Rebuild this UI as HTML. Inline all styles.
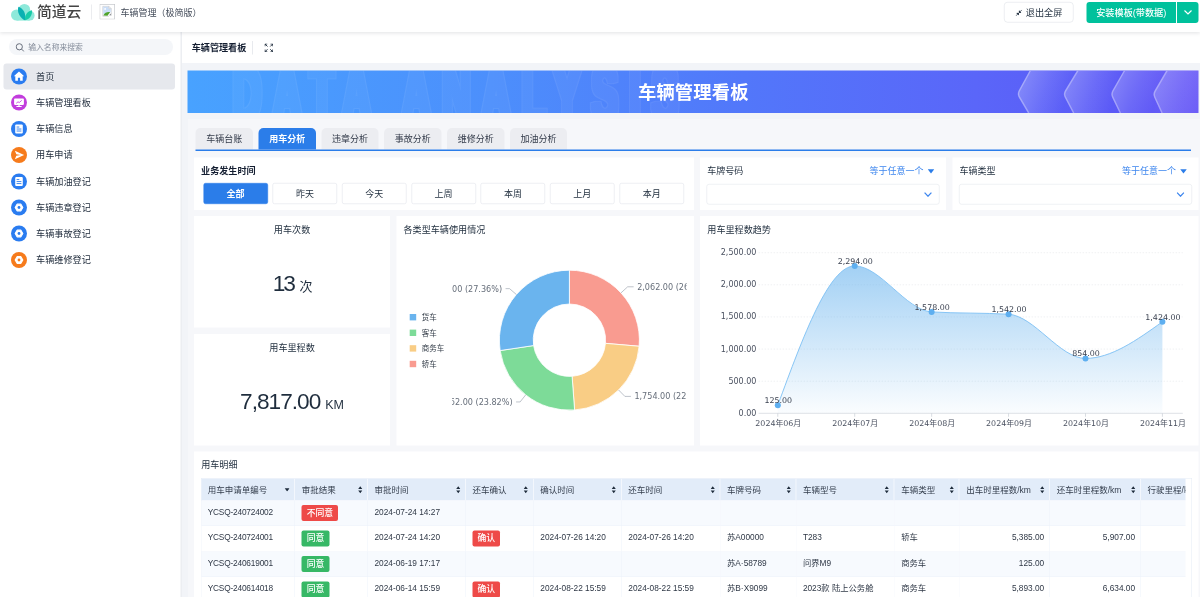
<!DOCTYPE html><html lang="zh-CN"><head><meta charset="utf-8"><title>车辆管理看板</title><style>
*{box-sizing:border-box}
html,body{margin:0;padding:0;width:1200px;height:597px;overflow:hidden;background:#fff}
#w{position:absolute;left:0;top:0;width:2400px;height:1194px;transform:scale(.5);transform-origin:0 0;
 font-family:"Liberation Sans","Noto Sans CJK SC",sans-serif;color:#1f2d3d;overflow:hidden;background:#f2f4f8;font-size:18px}
.abs{position:absolute}
#hdr{position:absolute;left:0;top:0;width:2400px;height:63.5px;background:#fff;box-shadow:0 2px 8px rgba(20,30,50,.13);z-index:10}
#side{position:absolute;left:0;top:63px;width:363.8px;height:1131px;background:#fff;border-right:3.4px solid #eceef2;z-index:2}
#tbar{position:absolute;left:361px;top:63px;width:2039px;height:63px;background:#fff}
.logo-t{position:absolute;left:74px;top:0px;font-size:29.5px;line-height:48px;color:#444;font-weight:500;letter-spacing:0}
.app-t{position:absolute;left:241px;top:9px;font-size:18px;line-height:32px;color:#434b59;white-space:nowrap}
.btn-exit{position:absolute;left:2008px;top:4px;width:139px;height:41px;border:1.5px solid #d9dce3;border-radius:7px;background:#fff;font-size:18px;line-height:38px;white-space:nowrap}
.btn-g{position:absolute;top:4px;height:41.6px;background:#00c19c;color:#fff;font-size:17.6px;line-height:42px;text-align:center;white-space:nowrap}
.search{position:absolute;left:17.5px;top:15px;width:328px;height:32px;border-radius:16px;background:#f4f6f9}
.search span{position:absolute;left:39px;top:0;line-height:32px;font-size:15.6px;color:#858d9b;white-space:nowrap}
.it{position:absolute;left:7px;width:343px;height:52px;border-radius:6px}
.it.on{background:#e6e8ed}
.it i{position:absolute;left:15px;top:10px;width:32px;height:32px;border-radius:50%;display:block}
.it span{position:absolute;left:65px;top:0;line-height:52px;font-size:18.3px;color:#232f3f;white-space:nowrap}
.it svg{position:absolute;left:0;top:0;width:32px;height:32px}
.card{position:absolute;background:#fff}
.ttl{position:absolute;font-size:18.2px;line-height:26px;white-space:nowrap;color:#1f2d3d}
.tab{position:absolute;top:255.6px;width:114.8px;height:43.4px;border-radius:10px 10px 0 0;background:#ecedf1;font-size:18px;line-height:44px;text-align:center;color:#333b4a;white-space:nowrap}
.tab.on{background:#2b7de9;color:#fff;font-weight:700}
.fb{position:absolute;top:50.8px;width:129px;height:41.8px;border:1.5px solid #dcdfe6;border-radius:4px;font-size:18px;line-height:43.6px;text-align:center;color:#1f2d3d;background:#fff}
.fb.on{background:#2b7de9;border-color:#2b7de9;color:#fff;font-weight:700}
.sel{position:absolute;top:52.4px;height:41.2px;border:1.5px solid #dfe2e8;border-radius:5px;background:#fff}
.eq{position:absolute;top:13.6px;font-size:18px;line-height:26px;color:#3d86ee;white-space:nowrap}
.kv{position:absolute;left:0;width:100%;text-align:center;white-space:nowrap;color:#1f2d3d}
.th,.td{position:absolute;white-space:nowrap;overflow:hidden;font-size:16.6px;color:#2f3846}
.th{color:#333d4c;font-size:17px}
.bdg{display:inline-block;height:31.6px;line-height:31.6px;padding:0 10px;border-radius:4px;color:#fff;font-weight:500;font-size:17.6px;vertical-align:top}
</style></head><body><div id="w">
<div id="hdr">
<svg class="abs" style="left:21px;top:6px" width="49" height="37" viewBox="55 30 245 185">
<g fill="#8ee9da"><circle cx="116" cy="150" r="56"/><circle cx="194" cy="96" r="57"/><circle cx="246" cy="156" r="50"/><rect x="116" y="150" width="130" height="56"/></g>
<path d="M200 203 C150 182 118 122 134 67 C188 84 212 140 200 203 Z" fill="#0ab0b2"/>
<path d="M200 203 C194 150 224 114 269 102 C276 152 246 192 200 203 Z" fill="#17cba8"/>
</svg>
<div class="logo-t">简道云</div>
<div class="abs" style="left:182px;top:9px;width:1.5px;height:30px;background:#ebecef"></div>
<svg class="abs" style="left:199px;top:8.4px" width="31" height="31" viewBox="0 0 33 33">
<rect x="0.75" y="0.75" width="31.5" height="31.5" fill="#fff" stroke="#c6c8cc" stroke-width="1.5"/>
<path d="M7 5 H20 L25 10 V21 L20 26 H7 Z" fill="#fff" stroke="#b9bcc2" stroke-width="1.2"/>
<path d="M8 6 H19.5 V10.5 H24 V17 L19 20 L8 22 Z" fill="#c9ddf7"/>
<path d="M8 24.5 C11 19 16 16.5 22.5 17.5 L17 25 Z" fill="#4ea22c"/>
<path d="M20 5 V10 H25" fill="none" stroke="#b9bcc2" stroke-width="1.2"/>
<path d="M21 23 l4 -3 v5 z" fill="#8a8d92"/>
<circle cx="12" cy="10.5" r="2" fill="#fff"/>
</svg>
<div class="app-t">车辆管理（极简版）</div>
<div class="btn-exit"><svg class="abs" style="left:22px;top:14px" width="13.5" height="13.5" viewBox="0 0 16 16"><path d="M9 7 L15 1 M9 7 V2.8 M9 7 H13.2 M7 9 L1 15 M7 9 V13.2 M7 9 H2.8" stroke="#1f2d3d" stroke-width="1.7" fill="none"/><path d="M8.4 7.6 V2.5 L13.5 7.6 Z M7.6 8.4 V13.5 L2.5 8.4 Z" fill="#1f2d3d"/></svg><span class="abs" style="left:42.5px;top:2.2px;font-size:18.3px">退出全屏</span></div>
<div class="btn-g" style="left:2173px;width:179px;border-radius:6px 0 0 6px;font-size:18.3px;font-weight:500;letter-spacing:0">安装模板(带数据)</div>
<div class="btn-g" style="left:2354px;width:42.5px;border-radius:0 6px 6px 0"><svg class="abs" style="left:13px;top:15px" width="18" height="12" viewBox="0 0 18 12"><path d="M2 2 L9 9 L16 2" fill="none" stroke="#fff" stroke-width="2.4"/></svg></div>
</div>
<div id="side">
<div class="search"><svg class="abs" style="left:13px;top:8px" width="18" height="18" viewBox="0 0 18 18"><circle cx="7.6" cy="7.6" r="6.2" fill="none" stroke="#5a6270" stroke-width="1.8"/><path d="M12.2 12.2 L17 17" stroke="#5a6270" stroke-width="1.8"/></svg><span>输入名称来搜索</span></div>
<div class="it on" style="top:64.0px"><i style="background:#2a7cf0"><svg viewBox="0 0 32 32"><path d="M16 6 L5.6 15.3 H8.6 V24.6 H13.8 V18.4 H18.2 V24.6 H23.4 V15.3 H26.4 Z" fill="#fff"/></svg></i><span>首页</span></div>
<div class="it" style="top:116.4px"><i style="background:#c23ddd"><svg viewBox="0 0 32 32"><rect x="6.2" y="8.2" width="19.6" height="12.6" rx="1.6" fill="#fff"/><path d="M10.5 17.5 L14 14.6 L16.5 16 L21.5 11.8" stroke="#c23ddd" stroke-width="1.7" fill="none"/><rect x="14.8" y="20.5" width="2.4" height="3" fill="#fff"/><rect x="10.5" y="22.8" width="11" height="2.2" rx="1" fill="#fff"/></svg></i><span>车辆管理看板</span></div>
<div class="it" style="top:168.8px"><i style="background:#2a7cf0"><svg viewBox="0 0 32 32"><rect x="8.4" y="6.8" width="15.2" height="18.4" rx="2.2" fill="#fff"/><rect x="11.2" y="11" width="5.4" height="2.1" fill="#2a7cf0" opacity=".85"/><rect x="11.2" y="15" width="9.6" height="2.1" fill="#2a7cf0" opacity=".85"/><rect x="11.2" y="19" width="9.6" height="2.1" fill="#2a7cf0" opacity=".85"/></svg></i><span>车辆信息</span></div>
<div class="it" style="top:221.2px"><i style="background:#f67b1c"><svg viewBox="0 0 32 32"><path d="M7.8 7.4 L26.2 16 L7.8 24.6 L10.6 17.3 L19.5 16 L10.6 14.7 Z" fill="#fff"/></svg></i><span>用车申请</span></div>
<div class="it" style="top:273.6px"><i style="background:#2a7cf0"><svg viewBox="0 0 32 32"><rect x="8.4" y="6.8" width="15.2" height="18.4" rx="2.2" fill="#fff"/><rect x="11.2" y="11" width="5.4" height="2.1" fill="#2a7cf0" opacity=".85"/><rect x="11.2" y="15" width="9.6" height="2.1" fill="#2a7cf0" opacity=".85"/><rect x="11.2" y="19" width="9.6" height="2.1" fill="#2a7cf0" opacity=".85"/></svg></i><span>车辆加油登记</span></div>
<div class="it" style="top:326.0px"><i style="background:#2a7cf0"><svg viewBox="0 0 32 32"><path d="M23.6 16 L19.8 22.6 H12.2 L8.4 16 L12.2 9.4 H19.8 Z" fill="#fff" stroke="#fff" stroke-width="2.4" stroke-linejoin="round"/><circle cx="16" cy="16" r="2.8" fill="#2a7cf0"/></svg></i><span>车辆违章登记</span></div>
<div class="it" style="top:378.4px"><i style="background:#2a7cf0"><svg viewBox="0 0 32 32"><path d="M23.6 16 L19.8 22.6 H12.2 L8.4 16 L12.2 9.4 H19.8 Z" fill="#fff" stroke="#fff" stroke-width="2.4" stroke-linejoin="round"/><circle cx="16" cy="16" r="2.8" fill="#2a7cf0"/></svg></i><span>车辆事故登记</span></div>
<div class="it" style="top:430.8px"><i style="background:#f67b1c"><svg viewBox="0 0 32 32"><path d="M23.6 16 L19.8 22.6 H12.2 L8.4 16 L12.2 9.4 H19.8 Z" fill="#fff" stroke="#fff" stroke-width="2.4" stroke-linejoin="round"/><circle cx="16" cy="16" r="2.8" fill="#f67b1c"/></svg></i><span>车辆维修登记</span></div>
</div>
<div id="tbar"><div class="abs" style="left:22.4px;top:18.6px;font-size:18.2px;line-height:28px;font-weight:700;color:#141e31;white-space:nowrap">车辆管理看板</div>
<div class="abs" style="left:143px;top:19px;width:1.5px;height:26.6px;background:#e8eaee"></div>
<svg class="abs" style="left:167.5px;top:23.5px" width="17.5" height="17.5" viewBox="0 0 19 19"><g fill="none" stroke="#1f2d3d" stroke-width="2"><path d="M1 6 V1 H6 M1.3 1.3 L6.5 6.5"/><path d="M13 1 H18 V6 M17.7 1.3 L12.5 6.5"/><path d="M1 13 V18 H6 M1.3 17.7 L6.5 12.5"/><path d="M18 13 V18 H13 M17.7 17.7 L12.5 12.5"/></g></svg>
</div>
<div class="abs" style="left:375.4px;top:141.0px;width:2021.8px;height:85.0px;background:linear-gradient(90deg,#48a2ff 0%,#4c8ffc 30%,#5277fa 55%,#5a66f9 78%,#5b58f6 93%,#6d5ef7 100%);overflow:hidden">
<svg class="abs" style="left:0;top:0" width="2021.8" height="85.0" viewBox="0 0 2021.8 85.0">
<defs><linearGradient id="cg" x1="0" y1="0" x2="1" y2="0"><stop offset="0" stop-color="#fff" stop-opacity=".25"/><stop offset=".85" stop-color="#fff" stop-opacity="0"/></linearGradient></defs>
<filter id="blk" x="-5%" y="-30%" width="110%" height="160%"><feMorphology in="SourceAlpha" operator="dilate" radius="4" result="t1"/><feMorphology in="SourceAlpha" operator="dilate" radius="5.3" result="t2"/><feComposite in="t2" in2="t1" operator="out" result="ring"/><feFlood flood-color="#fff" flood-opacity=".04"/><feComposite in2="t1" operator="in" result="fc"/><feFlood flood-color="#fff" flood-opacity=".085"/><feComposite in2="ring" operator="in" result="rc"/><feMerge><feMergeNode in="fc"/><feMergeNode in="rc"/></feMerge></filter>
<g filter="url(#blk)"><text transform="translate(91,0) scale(.52,1)" x="0" y="96" font-family="'Liberation Sans',sans-serif" font-weight="700" font-size="150" textLength="1712" lengthAdjust="spacing" fill="#fff">DATA ANALYSIS</text></g>
<linearGradient id="cg0" gradientUnits="userSpaceOnUse" x1="1663.0" y1="25" x2="1757.2" y2="62"><stop offset="0" stop-color="#fff" stop-opacity=".25"/><stop offset=".55" stop-color="#fff" stop-opacity=".1"/><stop offset="1" stop-color="#fff" stop-opacity="0"/></linearGradient>
<path d="M1684.6 0.0 L1662.3 40.9 Q1659.0 47.0 1662.5 53.0 L1681.2 85.0 L1771.2 85.0 L1754.5 53.2 Q1751.2 47.0 1754.8 41.0 L1779.6 0.0 Z" fill="url(#cg0)"/>
<path d="M1684.6 0.0 L1662.3 40.9 Q1659.0 47.0 1662.5 53.0 L1681.2 85.0" fill="none" stroke="rgba(255,255,255,.3)" stroke-width="3" transform="translate(1.2,0)"/>
<linearGradient id="cg1" gradientUnits="userSpaceOnUse" x1="1755.2" y1="25" x2="1852.2" y2="62"><stop offset="0" stop-color="#fff" stop-opacity=".25"/><stop offset=".55" stop-color="#fff" stop-opacity=".1"/><stop offset="1" stop-color="#fff" stop-opacity="0"/></linearGradient>
<path d="M1779.6 0.0 L1754.8 41.0 Q1751.2 47.0 1754.5 53.2 L1771.2 85.0 L1864.6 85.0 L1849.3 53.3 Q1846.2 47.0 1849.7 40.9 L1873.0 0.0 Z" fill="url(#cg1)"/>
<path d="M1779.6 0.0 L1754.8 41.0 Q1751.2 47.0 1754.5 53.2 L1771.2 85.0" fill="none" stroke="rgba(255,255,255,.3)" stroke-width="3" transform="translate(1.2,0)"/>
<linearGradient id="cg2" gradientUnits="userSpaceOnUse" x1="1850.2" y1="25" x2="1936.6" y2="62"><stop offset="0" stop-color="#fff" stop-opacity=".25"/><stop offset=".55" stop-color="#fff" stop-opacity=".1"/><stop offset="1" stop-color="#fff" stop-opacity="0"/></linearGradient>
<path d="M1873.0 0.0 L1849.7 40.9 Q1846.2 47.0 1849.3 53.3 L1864.6 85.0 L1948.0 85.0 L1933.5 53.4 Q1930.6 47.0 1934.1 41.0 L1958.0 0.0 Z" fill="url(#cg2)"/>
<path d="M1873.0 0.0 L1849.7 40.9 Q1846.2 47.0 1849.3 53.3 L1864.6 85.0" fill="none" stroke="rgba(255,255,255,.3)" stroke-width="3" transform="translate(1.2,0)"/>
<linearGradient id="cg3" gradientUnits="userSpaceOnUse" x1="1934.6" y1="25" x2="2028.6" y2="62"><stop offset="0" stop-color="#fff" stop-opacity=".25"/><stop offset=".55" stop-color="#fff" stop-opacity=".1"/><stop offset="1" stop-color="#fff" stop-opacity="0"/></linearGradient>
<path d="M1958.0 0.0 L1934.1 41.0 Q1930.6 47.0 1933.5 53.4 L1948.0 85.0 L2040.6 85.0 L2025.6 53.3 Q2022.6 47.0 2026.1 40.9 L2049.6 0.0 Z" fill="url(#cg3)"/>
<path d="M1958.0 0.0 L1934.1 41.0 Q1930.6 47.0 1933.5 53.4 L1948.0 85.0" fill="none" stroke="rgba(255,255,255,.3)" stroke-width="3" transform="translate(1.2,0)"/>
</svg>
<div class="abs" style="left:900.6px;top:19px;font-size:36.6px;line-height:50px;font-weight:700;color:#fff;white-space:nowrap;letter-spacing:.3px">车辆管理看板</div>
</div>
<div class="abs" style="left:376px;top:238.4px;width:2024px;height:960px;background:#f6f7fa"></div>
<div class="tab" style="left:391.2px">车辆台账</div>
<div class="tab on" style="left:516.9px">用车分析</div>
<div class="tab" style="left:642.6px">违章分析</div>
<div class="tab" style="left:768.3px">事故分析</div>
<div class="tab" style="left:894.0px">维修分析</div>
<div class="tab" style="left:1019.7px">加油分析</div>
<div class="abs" style="left:391.2px;top:298.8px;width:1990.4px;height:2.8px;background:#2b7de9"></div>
<div class="card" style="left:388.1px;top:315.2px;width:999.5px;height:104.6px">
<div class="ttl" style="left:14px;top:12.6px;font-weight:700;color:#141e31">业务发生时间</div>
<div class="fb on" style="left:18.5px">全部</div>
<div class="fb" style="left:157.2px">昨天</div>
<div class="fb" style="left:295.9px">今天</div>
<div class="fb" style="left:434.6px">上周</div>
<div class="fb" style="left:573.3px">本周</div>
<div class="fb" style="left:712.0px">上月</div>
<div class="fb" style="left:850.7px">本月</div>
</div>
<div class="card" style="left:1400.4px;top:315.2px;width:492.0px;height:104.6px">
<div class="ttl" style="left:14px;top:13.6px;font-size:18px">车牌号码</div>
<div class="eq" style="right:45.5px">等于任意一个</div>
<svg class="abs" style="right:23.5px;top:23px" width="14" height="9.5" viewBox="0 0 13 9"><path d="M0.3 0.6 H12.7 L6.5 8.6 Z" fill="#2b7de9"/></svg>
<div class="sel" style="left:13px;width:466.0px"><svg class="abs" style="right:14px;top:15px" width="16" height="10.5" viewBox="0 0 15 10"><path d="M1 1.2 L7.5 8 L14 1.2" fill="none" stroke="#3d86ee" stroke-width="2.4"/></svg></div>
</div>
<div class="card" style="left:1905.2px;top:315.2px;width:492.2px;height:104.6px">
<div class="ttl" style="left:14px;top:13.6px;font-size:18px">车辆类型</div>
<div class="eq" style="right:45.5px">等于任意一个</div>
<svg class="abs" style="right:23.5px;top:23px" width="14" height="9.5" viewBox="0 0 13 9"><path d="M0.3 0.6 H12.7 L6.5 8.6 Z" fill="#2b7de9"/></svg>
<div class="sel" style="left:13px;width:466.2px"><svg class="abs" style="right:14px;top:15px" width="16" height="10.5" viewBox="0 0 15 10"><path d="M1 1.2 L7.5 8 L14 1.2" fill="none" stroke="#3d86ee" stroke-width="2.4"/></svg></div>
</div>
<div class="card" style="left:388.1px;top:432.2px;width:392px;height:223px">
<div class="kv" style="top:14px;font-size:18.2px;line-height:26px">用车次数</div>
<div class="kv" style="top:107px;line-height:56px;padding-left:2px"><span style="font-size:45.5px;letter-spacing:-4px">13</span><span style="font-size:26px;margin-left:11px">次</span></div>
</div>
<div class="card" style="left:388.1px;top:668px;width:392px;height:222.7px">
<div class="kv" style="top:14px;font-size:18.2px;line-height:26px">用车里程数</div>
<div class="kv" style="top:105.5px;line-height:56px"><span style="font-size:45.3px;letter-spacing:-2px">7,817.00</span><span style="font-size:25px;margin-left:10px">KM</span></div>
</div>
<div class="card" style="left:792.8px;top:432.2px;width:594.8px;height:458.5px">
<div class="ttl" style="left:14.2px;top:14px">各类型车辆使用情况</div>
<svg class="abs" style="left:0;top:0" width="594.8" height="458.5" viewBox="0 0 594.8 458.5" font-family="'DejaVu Sans','Noto Sans CJK SC',sans-serif">
<defs><clipPath id="dc"><rect x="111.2" y="40" width="469.0" height="410"/></clipPath></defs>
<g clip-path="url(#dc)">
<path d="M345.80 108.40 A140.0 140.0 0 0 1 485.28 260.51 L417.93 254.66 A72.4 72.4 0 0 0 345.80 176.00 Z" fill="#f99b90" stroke="#fff" stroke-width="1.6"/>
<path d="M485.28 260.51 A140.0 140.0 0 0 1 356.20 388.01 L351.18 320.60 A72.4 72.4 0 0 0 417.93 254.66 Z" fill="#f9cd85" stroke="#fff" stroke-width="1.6"/>
<path d="M356.20 388.01 A140.0 140.0 0 0 1 207.34 269.11 L274.20 259.11 A72.4 72.4 0 0 0 351.18 320.60 Z" fill="#7ddb98" stroke="#fff" stroke-width="1.6"/>
<path d="M207.34 269.11 A140.0 140.0 0 0 1 345.80 108.40 L345.80 176.00 A72.4 72.4 0 0 0 274.20 259.11 Z" fill="#6ab4ee" stroke="#fff" stroke-width="1.6"/>
<polyline points="449.0,153.8 462.3,141.6 474.3,141.6" fill="none" stroke="#9aa3ad" stroke-width="1.3"/>
<text x="481.3" y="147.6" font-size="16.2" fill="#666e7a" text-anchor="start">2,062.00 (26.38%)</text>
<polyline points="444.2,348.0 456.8,360.8 468.8,360.8" fill="none" stroke="#9aa3ad" stroke-width="1.3"/>
<text x="475.8" y="366.8" font-size="16.2" fill="#666e7a" text-anchor="start">1,754.00 (22.44%)</text>
<polyline points="258.4,357.8 247.2,371.9 239.2,371.9" fill="none" stroke="#9aa3ad" stroke-width="1.3"/>
<text x="232.2" y="377.9" font-size="16.2" fill="#666e7a" text-anchor="end">1,862.00 (23.82%)</text>
<polyline points="239.7,157.0 226.1,145.3 218.1,145.3" fill="none" stroke="#9aa3ad" stroke-width="1.3"/>
<text x="211.1" y="151.3" font-size="16.2" fill="#666e7a" text-anchor="end">2,139.00 (27.36%)</text>
</g>
<rect x="26.4" y="196.0" width="13" height="12.8" fill="#6ab4ee"/>
<text x="50.4" y="208.0" font-size="15" fill="#333c48" font-family="'Liberation Sans','Noto Sans CJK SC',sans-serif">货车</text>
<rect x="26.4" y="227.2" width="13" height="12.8" fill="#7ddb98"/>
<text x="50.4" y="239.2" font-size="15" fill="#333c48" font-family="'Liberation Sans','Noto Sans CJK SC',sans-serif">客车</text>
<rect x="26.4" y="258.4" width="13" height="12.8" fill="#f9cd85"/>
<text x="50.4" y="270.4" font-size="15" fill="#333c48" font-family="'Liberation Sans','Noto Sans CJK SC',sans-serif">商务车</text>
<rect x="26.4" y="289.6" width="13" height="12.8" fill="#f99b90"/>
<text x="50.4" y="301.6" font-size="15" fill="#333c48" font-family="'Liberation Sans','Noto Sans CJK SC',sans-serif">轿车</text>
</svg></div>
<div class="card" style="left:1400.4px;top:432.2px;width:997px;height:458.5px">
<div class="ttl" style="left:14.2px;top:14px">用车里程数趋势</div>
<svg class="abs" style="left:0;top:0" width="997" height="458.5" viewBox="0 0 997 458.5" font-family="'DejaVu Sans','Noto Sans CJK SC',sans-serif">
<defs><linearGradient id="ag" x1="0" y1="0" x2="0" y2="1"><stop offset="0" stop-color="#6ab4ee" stop-opacity=".62"/><stop offset="1" stop-color="#6ab4ee" stop-opacity=".03"/></linearGradient></defs>
<text x="112.8" y="399.5" font-size="16" fill="#4a5160" text-anchor="end">0.00</text>
<line x1="117.2" y1="330.4" x2="965.6" y2="330.4" stroke="#e9ebee" stroke-width="1.4" stroke-dasharray="3 3"/>
<text x="112.8" y="335.3" font-size="16" fill="#4a5160" text-anchor="end">500.00</text>
<line x1="117.2" y1="266.1" x2="965.6" y2="266.1" stroke="#e9ebee" stroke-width="1.4" stroke-dasharray="3 3"/>
<text x="112.8" y="271.0" font-size="16" fill="#4a5160" text-anchor="end">1,000.00</text>
<line x1="117.2" y1="201.9" x2="965.6" y2="201.9" stroke="#e9ebee" stroke-width="1.4" stroke-dasharray="3 3"/>
<text x="112.8" y="206.8" font-size="16" fill="#4a5160" text-anchor="end">1,500.00</text>
<line x1="117.2" y1="137.6" x2="965.6" y2="137.6" stroke="#e9ebee" stroke-width="1.4" stroke-dasharray="3 3"/>
<text x="112.8" y="142.5" font-size="16" fill="#4a5160" text-anchor="end">2,000.00</text>
<line x1="117.2" y1="73.4" x2="965.6" y2="73.4" stroke="#e9ebee" stroke-width="1.4" stroke-dasharray="3 3"/>
<text x="112.8" y="78.3" font-size="16" fill="#4a5160" text-anchor="end">2,500.00</text>
<line x1="117.2" y1="394.6" x2="965.6" y2="394.6" stroke="#d5d9e0" stroke-width="1.6"/>
<path d="M155.60 378.54 C206.88 239.20 258.16 99.87 309.44 99.87 C360.72 99.87 412.00 188.78 463.28 191.86 C514.56 194.94 565.84 193.40 617.12 196.48 C668.40 199.57 719.68 284.88 770.96 284.88 C822.24 284.88 873.52 248.26 924.80 211.64 L924.80 394.60 L155.60 394.60 Z" fill="url(#ag)"/>
<path d="M155.60 378.54 C206.88 239.20 258.16 99.87 309.44 99.87 C360.72 99.87 412.00 188.78 463.28 191.86 C514.56 194.94 565.84 193.40 617.12 196.48 C668.40 199.57 719.68 284.88 770.96 284.88 C822.24 284.88 873.52 248.26 924.80 211.64" fill="none" stroke="#7cc0f4" stroke-width="1.8"/>
<line x1="155.6" y1="394.6" x2="155.6" y2="401.6" stroke="#c9ced6" stroke-width="1.4"/>
<circle cx="155.60" cy="378.54" r="6" fill="#5eaff0"/>
<text x="156.6" y="373.9" font-size="15.8" fill="#3a4150" text-anchor="middle">125.00</text>
<text x="156.6" y="419.2" font-size="15.8" fill="#4a5160" text-anchor="middle">2024年06月</text>
<line x1="309.4" y1="394.6" x2="309.4" y2="401.6" stroke="#c9ced6" stroke-width="1.4"/>
<circle cx="309.44" cy="99.87" r="6" fill="#5eaff0"/>
<text x="310.4" y="95.3" font-size="15.8" fill="#3a4150" text-anchor="middle">2,294.00</text>
<text x="310.4" y="419.2" font-size="15.8" fill="#4a5160" text-anchor="middle">2024年07月</text>
<line x1="463.3" y1="394.6" x2="463.3" y2="401.6" stroke="#c9ced6" stroke-width="1.4"/>
<circle cx="463.28" cy="191.86" r="6" fill="#5eaff0"/>
<text x="464.3" y="187.3" font-size="15.8" fill="#3a4150" text-anchor="middle">1,578.00</text>
<text x="464.3" y="419.2" font-size="15.8" fill="#4a5160" text-anchor="middle">2024年08月</text>
<line x1="617.1" y1="394.6" x2="617.1" y2="401.6" stroke="#c9ced6" stroke-width="1.4"/>
<circle cx="617.12" cy="196.48" r="6" fill="#5eaff0"/>
<text x="618.1" y="191.9" font-size="15.8" fill="#3a4150" text-anchor="middle">1,542.00</text>
<text x="618.1" y="419.2" font-size="15.8" fill="#4a5160" text-anchor="middle">2024年09月</text>
<line x1="771.0" y1="394.6" x2="771.0" y2="401.6" stroke="#c9ced6" stroke-width="1.4"/>
<circle cx="770.96" cy="284.88" r="6" fill="#5eaff0"/>
<text x="772.0" y="280.3" font-size="15.8" fill="#3a4150" text-anchor="middle">854.00</text>
<text x="772.0" y="419.2" font-size="15.8" fill="#4a5160" text-anchor="middle">2024年10月</text>
<line x1="924.8" y1="394.6" x2="924.8" y2="401.6" stroke="#c9ced6" stroke-width="1.4"/>
<circle cx="924.80" cy="211.64" r="6" fill="#5eaff0"/>
<text x="925.8" y="207.0" font-size="15.8" fill="#3a4150" text-anchor="middle">1,424.00</text>
<text x="925.8" y="419.2" font-size="15.8" fill="#4a5160" text-anchor="middle">2024年11月</text>
</svg></div>
<div class="card" style="left:388.1px;top:903.4px;width:2009.3px;height:300px">
<div class="ttl" style="left:14.2px;top:13px">用车明细</div>
<div class="abs" style="left:13.7px;top:52.6px;width:1982.6px;height:260px;border:1.4px solid #e3eaf5;border-bottom:0;overflow:hidden;background:#fff">
<div class="abs" style="left:0;top:0;width:1968.2px;height:260px;overflow:hidden">
<div class="th" style="left:-1.4px;top:0;width:189.0px;height:43.8px;line-height:45.8px;background:#e2ecf9;border-right:2px solid #f3f7fd;padding-left:14px">用车申请单编号<svg class="abs" style="right:9px;top:19px" width="10.5" height="7.5" viewBox="0 0 10 7"><path d="M0.3 0.5 H9.7 L5 6.5 Z" fill="#1f2d3d"/></svg></div>
<div class="th" style="left:187.6px;top:0;width:145.6px;height:43.8px;line-height:45.8px;background:#e2ecf9;border-right:2px solid #f3f7fd;padding-left:13px">审批结果<svg class="abs" style="right:9.2px;top:15px" width="9" height="15" viewBox="0 0 9 15"><path d="M4.5 0.5 L8.6 6 H0.4 Z M4.5 14.5 L8.6 9 H0.4 Z" fill="#1f2d3d"/></svg></div>
<div class="th" style="left:333.2px;top:0;width:196.1px;height:43.8px;line-height:45.8px;background:#e2ecf9;border-right:2px solid #f3f7fd;padding-left:13px">审批时间<svg class="abs" style="right:9.2px;top:15px" width="9" height="15" viewBox="0 0 9 15"><path d="M4.5 0.5 L8.6 6 H0.4 Z M4.5 14.5 L8.6 9 H0.4 Z" fill="#1f2d3d"/></svg></div>
<div class="th" style="left:529.3px;top:0;width:135.6px;height:43.8px;line-height:45.8px;background:#e2ecf9;border-right:2px solid #f3f7fd;padding-left:13px">还车确认<svg class="abs" style="right:9.2px;top:15px" width="9" height="15" viewBox="0 0 9 15"><path d="M4.5 0.5 L8.6 6 H0.4 Z M4.5 14.5 L8.6 9 H0.4 Z" fill="#1f2d3d"/></svg></div>
<div class="th" style="left:664.9px;top:0;width:176.0px;height:43.8px;line-height:45.8px;background:#e2ecf9;border-right:2px solid #f3f7fd;padding-left:13px">确认时间<svg class="abs" style="right:9.2px;top:15px" width="9" height="15" viewBox="0 0 9 15"><path d="M4.5 0.5 L8.6 6 H0.4 Z M4.5 14.5 L8.6 9 H0.4 Z" fill="#1f2d3d"/></svg></div>
<div class="th" style="left:840.9px;top:0;width:197.4px;height:43.8px;line-height:45.8px;background:#e2ecf9;border-right:2px solid #f3f7fd;padding-left:13px">还车时间<svg class="abs" style="right:9.2px;top:15px" width="9" height="15" viewBox="0 0 9 15"><path d="M4.5 0.5 L8.6 6 H0.4 Z M4.5 14.5 L8.6 9 H0.4 Z" fill="#1f2d3d"/></svg></div>
<div class="th" style="left:1038.3px;top:0;width:151.7px;height:43.8px;line-height:45.8px;background:#e2ecf9;border-right:2px solid #f3f7fd;padding-left:13px">车牌号码<svg class="abs" style="right:9.2px;top:15px" width="9" height="15" viewBox="0 0 9 15"><path d="M4.5 0.5 L8.6 6 H0.4 Z M4.5 14.5 L8.6 9 H0.4 Z" fill="#1f2d3d"/></svg></div>
<div class="th" style="left:1190.0px;top:0;width:196.7px;height:43.8px;line-height:45.8px;background:#e2ecf9;border-right:2px solid #f3f7fd;padding-left:13px">车辆型号<svg class="abs" style="right:9.2px;top:15px" width="9" height="15" viewBox="0 0 9 15"><path d="M4.5 0.5 L8.6 6 H0.4 Z M4.5 14.5 L8.6 9 H0.4 Z" fill="#1f2d3d"/></svg></div>
<div class="th" style="left:1386.7px;top:0;width:130.0px;height:43.8px;line-height:45.8px;background:#e2ecf9;border-right:2px solid #f3f7fd;padding-left:13px">车辆类型<svg class="abs" style="right:9.2px;top:15px" width="9" height="15" viewBox="0 0 9 15"><path d="M4.5 0.5 L8.6 6 H0.4 Z M4.5 14.5 L8.6 9 H0.4 Z" fill="#1f2d3d"/></svg></div>
<div class="th" style="left:1516.7px;top:0;width:181.0px;height:43.8px;line-height:45.8px;background:#e2ecf9;border-right:2px solid #f3f7fd;padding-left:13px">出车时里程数/km<svg class="abs" style="right:9.2px;top:15px" width="9" height="15" viewBox="0 0 9 15"><path d="M4.5 0.5 L8.6 6 H0.4 Z M4.5 14.5 L8.6 9 H0.4 Z" fill="#1f2d3d"/></svg></div>
<div class="th" style="left:1697.7px;top:0;width:181.6px;height:43.8px;line-height:45.8px;background:#e2ecf9;border-right:2px solid #f3f7fd;padding-left:13px">还车时里程数/km<svg class="abs" style="right:9.2px;top:15px" width="9" height="15" viewBox="0 0 9 15"><path d="M4.5 0.5 L8.6 6 H0.4 Z M4.5 14.5 L8.6 9 H0.4 Z" fill="#1f2d3d"/></svg></div>
<div class="th" style="left:1879.3px;top:0;width:197.5px;height:43.8px;line-height:45.8px;background:#e2ecf9;border-right:2px solid #f3f7fd;padding-left:13px">行驶里程/km<svg class="abs" style="right:9.2px;top:15px" width="9" height="15" viewBox="0 0 9 15"><path d="M4.5 0.5 L8.6 6 H0.4 Z M4.5 14.5 L8.6 9 H0.4 Z" fill="#1f2d3d"/></svg></div>
<div class="td" style="left:-1.4px;top:43.8px;width:189.0px;height:51.1px;line-height:46.7px;background:#f7fafe;border-right:1.4px solid #edf2fa;border-bottom:1.4px solid #edf2fa;padding-left:14px;letter-spacing:-.36px">YCSQ-240724002</div>
<div class="td" style="left:187.6px;top:43.8px;width:145.6px;height:51.1px;line-height:46.7px;background:#f7fafe;border-right:1.4px solid #edf2fa;border-bottom:1.4px solid #edf2fa;padding-left:13px"><span class="bdg" style="background:#ee4a48;margin-top:9.3px">不同意</span></div>
<div class="td" style="left:333.2px;top:43.8px;width:196.1px;height:51.1px;line-height:46.7px;background:#f7fafe;border-right:1.4px solid #edf2fa;border-bottom:1.4px solid #edf2fa;padding-left:13px">2024-07-24 14:27</div>
<div class="td" style="left:529.3px;top:43.8px;width:135.6px;height:51.1px;line-height:46.7px;background:#f7fafe;border-right:1.4px solid #edf2fa;border-bottom:1.4px solid #edf2fa;padding-left:13px"></div>
<div class="td" style="left:664.9px;top:43.8px;width:176.0px;height:51.1px;line-height:46.7px;background:#f7fafe;border-right:1.4px solid #edf2fa;border-bottom:1.4px solid #edf2fa;padding-left:13px"></div>
<div class="td" style="left:840.9px;top:43.8px;width:197.4px;height:51.1px;line-height:46.7px;background:#f7fafe;border-right:1.4px solid #edf2fa;border-bottom:1.4px solid #edf2fa;padding-left:13px"></div>
<div class="td" style="left:1038.3px;top:43.8px;width:151.7px;height:51.1px;line-height:46.7px;background:#f7fafe;border-right:1.4px solid #edf2fa;border-bottom:1.4px solid #edf2fa;padding-left:13px"></div>
<div class="td" style="left:1190.0px;top:43.8px;width:196.7px;height:51.1px;line-height:46.7px;background:#f7fafe;border-right:1.4px solid #edf2fa;border-bottom:1.4px solid #edf2fa;padding-left:13px"></div>
<div class="td" style="left:1386.7px;top:43.8px;width:130.0px;height:51.1px;line-height:46.7px;background:#f7fafe;border-right:1.4px solid #edf2fa;border-bottom:1.4px solid #edf2fa;padding-left:13px"></div>
<div class="td" style="left:1516.7px;top:43.8px;width:181.0px;height:51.1px;line-height:46.7px;background:#f7fafe;border-right:1.4px solid #edf2fa;border-bottom:1.4px solid #edf2fa;padding-right:11px;text-align:right"></div>
<div class="td" style="left:1697.7px;top:43.8px;width:181.6px;height:51.1px;line-height:46.7px;background:#f7fafe;border-right:1.4px solid #edf2fa;border-bottom:1.4px solid #edf2fa;padding-right:11px;text-align:right"></div>
<div class="td" style="left:1879.3px;top:43.8px;width:197.5px;height:51.1px;line-height:46.7px;background:#f7fafe;border-right:1.4px solid #edf2fa;border-bottom:1.4px solid #edf2fa;padding-right:11px;text-align:right"></div>
<div class="td" style="left:-1.4px;top:94.9px;width:189.0px;height:51.1px;line-height:46.7px;background:#fff;border-right:1.4px solid #edf2fa;border-bottom:1.4px solid #edf2fa;padding-left:14px;letter-spacing:-.36px">YCSQ-240724001</div>
<div class="td" style="left:187.6px;top:94.9px;width:145.6px;height:51.1px;line-height:46.7px;background:#fff;border-right:1.4px solid #edf2fa;border-bottom:1.4px solid #edf2fa;padding-left:13px"><span class="bdg" style="background:#37b866;margin-top:9.3px">同意</span></div>
<div class="td" style="left:333.2px;top:94.9px;width:196.1px;height:51.1px;line-height:46.7px;background:#fff;border-right:1.4px solid #edf2fa;border-bottom:1.4px solid #edf2fa;padding-left:13px">2024-07-24 14:20</div>
<div class="td" style="left:529.3px;top:94.9px;width:135.6px;height:51.1px;line-height:46.7px;background:#fff;border-right:1.4px solid #edf2fa;border-bottom:1.4px solid #edf2fa;padding-left:13px"><span class="bdg" style="background:#ee4a48;margin-top:9.3px">确认</span></div>
<div class="td" style="left:664.9px;top:94.9px;width:176.0px;height:51.1px;line-height:46.7px;background:#fff;border-right:1.4px solid #edf2fa;border-bottom:1.4px solid #edf2fa;padding-left:13px">2024-07-26 14:20</div>
<div class="td" style="left:840.9px;top:94.9px;width:197.4px;height:51.1px;line-height:46.7px;background:#fff;border-right:1.4px solid #edf2fa;border-bottom:1.4px solid #edf2fa;padding-left:13px">2024-07-26 14:20</div>
<div class="td" style="left:1038.3px;top:94.9px;width:151.7px;height:51.1px;line-height:46.7px;background:#fff;border-right:1.4px solid #edf2fa;border-bottom:1.4px solid #edf2fa;padding-left:13px">苏A00000</div>
<div class="td" style="left:1190.0px;top:94.9px;width:196.7px;height:51.1px;line-height:46.7px;background:#fff;border-right:1.4px solid #edf2fa;border-bottom:1.4px solid #edf2fa;padding-left:13px">T283</div>
<div class="td" style="left:1386.7px;top:94.9px;width:130.0px;height:51.1px;line-height:46.7px;background:#fff;border-right:1.4px solid #edf2fa;border-bottom:1.4px solid #edf2fa;padding-left:13px">轿车</div>
<div class="td" style="left:1516.7px;top:94.9px;width:181.0px;height:51.1px;line-height:46.7px;background:#fff;border-right:1.4px solid #edf2fa;border-bottom:1.4px solid #edf2fa;padding-right:11px;text-align:right">5,385.00</div>
<div class="td" style="left:1697.7px;top:94.9px;width:181.6px;height:51.1px;line-height:46.7px;background:#fff;border-right:1.4px solid #edf2fa;border-bottom:1.4px solid #edf2fa;padding-right:11px;text-align:right">5,907.00</div>
<div class="td" style="left:1879.3px;top:94.9px;width:197.5px;height:51.1px;line-height:46.7px;background:#fff;border-right:1.4px solid #edf2fa;border-bottom:1.4px solid #edf2fa;padding-right:11px;text-align:right"></div>
<div class="td" style="left:-1.4px;top:146.0px;width:189.0px;height:51.1px;line-height:46.7px;background:#f7fafe;border-right:1.4px solid #edf2fa;border-bottom:1.4px solid #edf2fa;padding-left:14px;letter-spacing:-.36px">YCSQ-240619001</div>
<div class="td" style="left:187.6px;top:146.0px;width:145.6px;height:51.1px;line-height:46.7px;background:#f7fafe;border-right:1.4px solid #edf2fa;border-bottom:1.4px solid #edf2fa;padding-left:13px"><span class="bdg" style="background:#37b866;margin-top:9.3px">同意</span></div>
<div class="td" style="left:333.2px;top:146.0px;width:196.1px;height:51.1px;line-height:46.7px;background:#f7fafe;border-right:1.4px solid #edf2fa;border-bottom:1.4px solid #edf2fa;padding-left:13px">2024-06-19 17:17</div>
<div class="td" style="left:529.3px;top:146.0px;width:135.6px;height:51.1px;line-height:46.7px;background:#f7fafe;border-right:1.4px solid #edf2fa;border-bottom:1.4px solid #edf2fa;padding-left:13px"></div>
<div class="td" style="left:664.9px;top:146.0px;width:176.0px;height:51.1px;line-height:46.7px;background:#f7fafe;border-right:1.4px solid #edf2fa;border-bottom:1.4px solid #edf2fa;padding-left:13px"></div>
<div class="td" style="left:840.9px;top:146.0px;width:197.4px;height:51.1px;line-height:46.7px;background:#f7fafe;border-right:1.4px solid #edf2fa;border-bottom:1.4px solid #edf2fa;padding-left:13px"></div>
<div class="td" style="left:1038.3px;top:146.0px;width:151.7px;height:51.1px;line-height:46.7px;background:#f7fafe;border-right:1.4px solid #edf2fa;border-bottom:1.4px solid #edf2fa;padding-left:13px">苏A·58789</div>
<div class="td" style="left:1190.0px;top:146.0px;width:196.7px;height:51.1px;line-height:46.7px;background:#f7fafe;border-right:1.4px solid #edf2fa;border-bottom:1.4px solid #edf2fa;padding-left:13px">问界M9</div>
<div class="td" style="left:1386.7px;top:146.0px;width:130.0px;height:51.1px;line-height:46.7px;background:#f7fafe;border-right:1.4px solid #edf2fa;border-bottom:1.4px solid #edf2fa;padding-left:13px">商务车</div>
<div class="td" style="left:1516.7px;top:146.0px;width:181.0px;height:51.1px;line-height:46.7px;background:#f7fafe;border-right:1.4px solid #edf2fa;border-bottom:1.4px solid #edf2fa;padding-right:11px;text-align:right">125.00</div>
<div class="td" style="left:1697.7px;top:146.0px;width:181.6px;height:51.1px;line-height:46.7px;background:#f7fafe;border-right:1.4px solid #edf2fa;border-bottom:1.4px solid #edf2fa;padding-right:11px;text-align:right"></div>
<div class="td" style="left:1879.3px;top:146.0px;width:197.5px;height:51.1px;line-height:46.7px;background:#f7fafe;border-right:1.4px solid #edf2fa;border-bottom:1.4px solid #edf2fa;padding-right:11px;text-align:right"></div>
<div class="td" style="left:-1.4px;top:197.1px;width:189.0px;height:51.1px;line-height:46.7px;background:#fff;border-right:1.4px solid #edf2fa;border-bottom:1.4px solid #edf2fa;padding-left:14px;letter-spacing:-.36px">YCSQ-240614018</div>
<div class="td" style="left:187.6px;top:197.1px;width:145.6px;height:51.1px;line-height:46.7px;background:#fff;border-right:1.4px solid #edf2fa;border-bottom:1.4px solid #edf2fa;padding-left:13px"><span class="bdg" style="background:#37b866;margin-top:9.3px">同意</span></div>
<div class="td" style="left:333.2px;top:197.1px;width:196.1px;height:51.1px;line-height:46.7px;background:#fff;border-right:1.4px solid #edf2fa;border-bottom:1.4px solid #edf2fa;padding-left:13px">2024-06-14 15:59</div>
<div class="td" style="left:529.3px;top:197.1px;width:135.6px;height:51.1px;line-height:46.7px;background:#fff;border-right:1.4px solid #edf2fa;border-bottom:1.4px solid #edf2fa;padding-left:13px"><span class="bdg" style="background:#ee4a48;margin-top:9.3px">确认</span></div>
<div class="td" style="left:664.9px;top:197.1px;width:176.0px;height:51.1px;line-height:46.7px;background:#fff;border-right:1.4px solid #edf2fa;border-bottom:1.4px solid #edf2fa;padding-left:13px">2024-08-22 15:59</div>
<div class="td" style="left:840.9px;top:197.1px;width:197.4px;height:51.1px;line-height:46.7px;background:#fff;border-right:1.4px solid #edf2fa;border-bottom:1.4px solid #edf2fa;padding-left:13px">2024-08-22 15:59</div>
<div class="td" style="left:1038.3px;top:197.1px;width:151.7px;height:51.1px;line-height:46.7px;background:#fff;border-right:1.4px solid #edf2fa;border-bottom:1.4px solid #edf2fa;padding-left:13px">苏B·X9099</div>
<div class="td" style="left:1190.0px;top:197.1px;width:196.7px;height:51.1px;line-height:46.7px;background:#fff;border-right:1.4px solid #edf2fa;border-bottom:1.4px solid #edf2fa;padding-left:13px">2023款 陆上公务舱</div>
<div class="td" style="left:1386.7px;top:197.1px;width:130.0px;height:51.1px;line-height:46.7px;background:#fff;border-right:1.4px solid #edf2fa;border-bottom:1.4px solid #edf2fa;padding-left:13px">商务车</div>
<div class="td" style="left:1516.7px;top:197.1px;width:181.0px;height:51.1px;line-height:46.7px;background:#fff;border-right:1.4px solid #edf2fa;border-bottom:1.4px solid #edf2fa;padding-right:11px;text-align:right">5,893.00</div>
<div class="td" style="left:1697.7px;top:197.1px;width:181.6px;height:51.1px;line-height:46.7px;background:#fff;border-right:1.4px solid #edf2fa;border-bottom:1.4px solid #edf2fa;padding-right:11px;text-align:right">6,634.00</div>
<div class="td" style="left:1879.3px;top:197.1px;width:197.5px;height:51.1px;line-height:46.7px;background:#fff;border-right:1.4px solid #edf2fa;border-bottom:1.4px solid #edf2fa;padding-right:11px;text-align:right"></div>
</div></div></div>
</div></body></html>
